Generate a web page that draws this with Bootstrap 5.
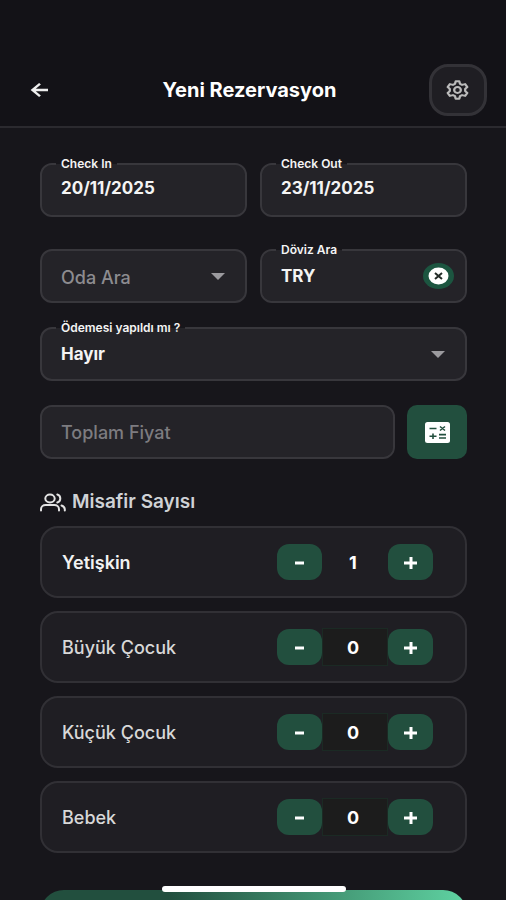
<!DOCTYPE html>
<html lang="tr" data-bs-theme="dark">
<head>
<meta charset="utf-8">
<meta name="viewport" content="width=device-width, initial-scale=1">
<title>Yeni Rezervasyon</title>
<link href="https://cdn.jsdelivr.net/npm/bootstrap@5.3.0/dist/css/bootstrap.min.css" rel="stylesheet">
<style>
:root{--page:#17161b;--field:#242328;--line:#38373c;--green:#224f3e}
body{background:var(--page);color:#f4f4f4;font-family:Inter,"Liberation Sans",sans-serif;font-size:18px}
.topbar{background:#131217;padding:64px 19px 10px 20px;border-bottom:2px solid #2b2a2f}
.topbar h1{font-size:20px;font-weight:700;line-height:24px}
.back-btn{width:50px;height:52px;padding:0 0 0 10px;border:0;color:#eee;line-height:0}
.gear-btn{width:58px;height:52px;padding:0;background:#1f1e23;border:3px solid #333237;border-radius:19px;color:#bbb;line-height:0}
.content{padding:35px 39px 0 40px;scrollbar-width:none}
.content::-webkit-scrollbar{display:none}
.gap-fields{gap:13px}
.gap-calc{gap:12px}
.field-row{margin-top:32px}
.box-field{position:relative;height:54px}
.box-field .form-control,.box-field .form-select{height:100%;background-color:var(--field);border:2px solid var(--line);border-radius:12px;padding:0 19px;color:#f4f4f4;font-size:17px;font-weight:700}
.box-field .form-select{padding-top:2px;background-size:14px 7px;background-position:right 20px center;--bs-form-select-bg-img:url("data:image/svg+xml,%3Csvg xmlns='http://www.w3.org/2000/svg' viewBox='0 0 14 7'%3E%3Cpath d='M0 0h14L7 7z' fill='%239b9a9e'/%3E%3C/svg%3E")}
.box-field .form-select.unset{color:#8d8c90;font-weight:500;font-size:18px}
.box-field .form-control.price{font-weight:500;font-size:18px}
.box-field .form-control::placeholder{color:#7d7c80;opacity:1}
.box-field label{position:absolute;left:16px;top:-6px;padding:0 5px;font-size:12px;line-height:14px;font-weight:600;background:linear-gradient(var(--page) 50%,var(--field) 50%)}
.clear-btn{position:absolute;right:13px;top:14px;width:31px;height:26px;padding:0;border:0;line-height:0}
.calc-btn{width:60px;height:54px;padding:0;border:0;border-radius:10px;background:var(--green);line-height:0}
.section-title{font-size:19px;line-height:24px;font-weight:600;color:#cfd2d6;padding:31px 0 12px;gap:6px}
.guest-card{background:#1f1e23;border:2px solid #313035;border-radius:18px;height:72px;padding:0 32px 0 20px}
.guest-card label{font-weight:500;color:#d8d8d8}
.guest-card.active label{font-weight:600;color:#f2f2f2}
.step-btn{width:45px;height:36px;padding:0;border:0;border-radius:12px;background:var(--green);color:#fff;line-height:0}
.count-box{width:66px;height:38px;padding:0 4px 0 0;text-align:center;background:#1c1c1c;border:1px solid #1b2a24;color:#fff;font-size:18px;font-weight:700}
.active .count-box{background:transparent;border-color:transparent}
.save-btn{height:60px;margin-top:37px;border:0;border-radius:24px;background:linear-gradient(90deg,#224f3e 30%,#5fd3a2);color:#fff;font-weight:700}
.home-bar{left:50%;bottom:8px;width:184px;height:6px;margin-left:-91px;border-radius:3px;background:#fff}
</style>
</head>
<body>
<div class="vh-100 d-flex flex-column overflow-hidden">
  <header class="topbar d-flex align-items-center justify-content-between">
    <button class="btn back-btn text-start" type="button" aria-label="Geri">
      <svg width="19" height="16" viewBox="0 0 19 18" preserveAspectRatio="none" fill="none" stroke="currentColor" stroke-width="2.6"><path d="M18 9H3M10 2L2.5 9l7.5 7"/></svg>
    </button>
    <h1 class="m-0">Yeni Rezervasyon</h1>
    <button class="btn gear-btn" type="button" aria-label="Ayarlar">
      <svg width="25" height="22" viewBox="0 0 24 24" preserveAspectRatio="none" fill="none" stroke="currentColor" stroke-width="2.2" stroke-linejoin="round"><path d="M9.6 5.2 10.3 2.4h3.4l.7 2.8 2 1.2 2.9-.8 2.1 3.2-2 2v2.4l2 2-2.1 3.2-2.9-.8-2 1.2-.7 2.8h-3.4l-.7-2.8-2-1.2-2.9.8-2.1-3.2 2-2v-2.4l-2-2 2.1-3.2 2.9.8z"/><circle cx="12" cy="12" r="3.2"/></svg>
    </button>
  </header>

  <main class="content flex-grow-1 overflow-auto">
    <form>
      <div class="d-flex gap-fields">
        <div class="box-field flex-fill w-50"><input class="form-control pb-1" id="checkin" type="text" value="20/11/2025"><label for="checkin">Check In</label></div>
        <div class="box-field flex-fill w-50"><input class="form-control pb-1" id="checkout" type="text" value="23/11/2025"><label for="checkout">Check Out</label></div>
      </div>
      <div class="d-flex gap-fields field-row">
        <div class="box-field flex-fill w-50"><select class="form-select unset" aria-label="Oda Ara"><option>Oda Ara</option></select></div>
        <div class="box-field flex-fill w-50">
          <input class="form-control" id="currency" type="text" value="TRY"><label for="currency">Döviz Ara</label>
          <button class="btn clear-btn" type="button" aria-label="Temizle">
            <svg width="31" height="26" viewBox="0 0 31 26"><ellipse cx="15.5" cy="13" rx="15.5" ry="13" fill="#1c5540"/><ellipse cx="15.5" cy="13" rx="10" ry="8.5" fill="#fff"/><path d="M12 10l7 6M19 10l-7 6" stroke="#222b27" stroke-width="2"/></svg>
          </button>
        </div>
      </div>
      <div class="box-field mt-4"><select class="form-select" id="paid"><option>Hayır</option><option>Evet</option></select><label for="paid">Ödemesi yapıldı mı ?</label></div>
      <div class="d-flex mt-4 gap-calc">
        <div class="box-field flex-fill"><input class="form-control price" type="text" placeholder="Toplam Fiyat" aria-label="Toplam Fiyat"></div>
        <button class="btn calc-btn" type="button" aria-label="Hesapla">
          <svg width="25" height="21" viewBox="0 0 25 21"><rect width="25" height="21" rx="2.5" fill="#fff"/><g stroke="#224f3e" stroke-width="1.6" fill="none"><path d="M4.5 6.5h7M15 4.5l5 4M20 4.5l-5 4M4.5 14.2h7M8 11.5v5.4M14 12.6h7M14 16h7"/></g></svg>
        </button>
      </div>

      <h2 class="section-title d-flex align-items-center m-0">
        <svg width="26" height="19" viewBox="0 0 26 19" fill="none" stroke="#e3e3e3" stroke-width="2" stroke-linecap="round"><ellipse cx="10" cy="5.5" rx="4.7" ry="4"/><path d="M1 17.5v-1.2c0-2.5 2-4.300 4.7-4.3h8.6c2.7 0 4.7 1.8 4.7 4.3v1.2M17.3 1.5c4 1 4 7 0 8M21.5 12.5c2 .7 3.3 2 3.3 4v1"/></svg>
        <span>Misafir Sayısı</span>
      </h2>

      <div class="d-flex flex-column gap-fields">
        <div class="guest-card active d-flex align-items-center justify-content-between">
          <label for="adult">Yetişkin</label>
          <div class="d-flex align-items-center">
            <button class="btn step-btn" type="button" aria-label="Azalt"><svg width="14" height="14"><path d="M2 8h9" stroke="#fff" stroke-width="3"/></svg></button>
            <input class="count-box" id="adult" type="text" value="1">
            <button class="btn step-btn" type="button" aria-label="Artır"><svg width="14" height="14"><path d="M0 8h13M7 2v12" stroke="#fff" stroke-width="3"/></svg></button>
          </div>
        </div>
        <div class="guest-card d-flex align-items-center justify-content-between">
          <label for="older">Büyük Çocuk</label>
          <div class="d-flex align-items-center">
            <button class="btn step-btn" type="button" aria-label="Azalt"><svg width="14" height="14"><path d="M2 8h9" stroke="#fff" stroke-width="3"/></svg></button>
            <input class="count-box" id="older" type="text" value="0">
            <button class="btn step-btn" type="button" aria-label="Artır"><svg width="14" height="14"><path d="M0 8h13M7 2v12" stroke="#fff" stroke-width="3"/></svg></button>
          </div>
        </div>
        <div class="guest-card d-flex align-items-center justify-content-between">
          <label for="younger">Küçük Çocuk</label>
          <div class="d-flex align-items-center">
            <button class="btn step-btn" type="button" aria-label="Azalt"><svg width="14" height="14"><path d="M2 8h9" stroke="#fff" stroke-width="3"/></svg></button>
            <input class="count-box" id="younger" type="text" value="0">
            <button class="btn step-btn" type="button" aria-label="Artır"><svg width="14" height="14"><path d="M0 8h13M7 2v12" stroke="#fff" stroke-width="3"/></svg></button>
          </div>
        </div>
        <div class="guest-card d-flex align-items-center justify-content-between">
          <label for="baby">Bebek</label>
          <div class="d-flex align-items-center">
            <button class="btn step-btn" type="button" aria-label="Azalt"><svg width="14" height="14"><path d="M2 8h9" stroke="#fff" stroke-width="3"/></svg></button>
            <input class="count-box" id="baby" type="text" value="0">
            <button class="btn step-btn" type="button" aria-label="Artır"><svg width="14" height="14"><path d="M0 8h13M7 2v12" stroke="#fff" stroke-width="3"/></svg></button>
          </div>
        </div>
      </div>
      <button class="btn save-btn w-100" type="submit" aria-label="Kaydet"></button>
    </form>
  </main>
</div>
<div class="home-bar position-fixed"></div>
<script src="https://cdn.jsdelivr.net/npm/bootstrap@5.3.0/dist/js/bootstrap.bundle.min.js"></script>
</body>
</html>
